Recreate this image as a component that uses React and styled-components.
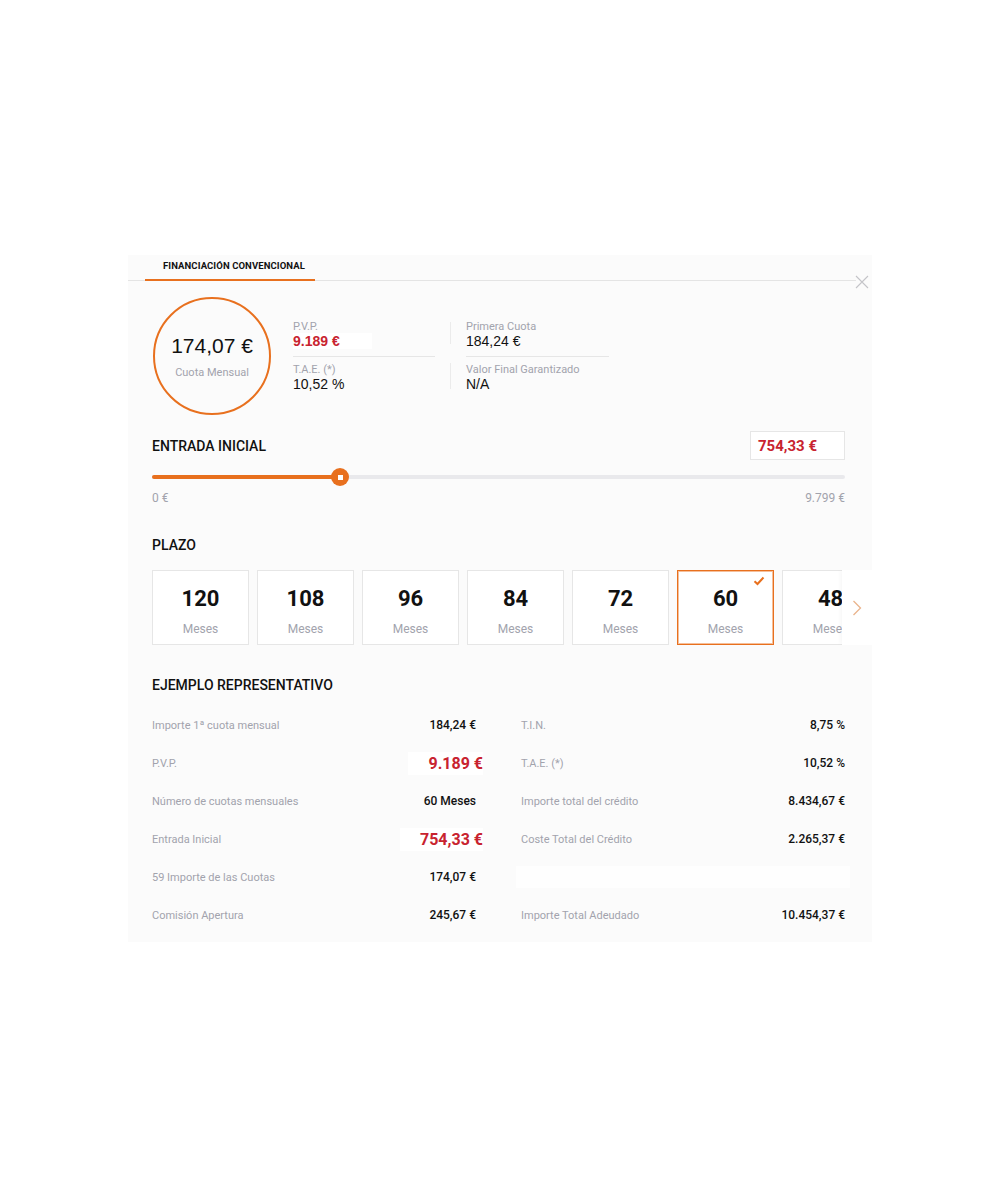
import React from "react";
import styled, { createGlobalStyle, css } from "styled-components";

const ORANGE = "#e8701e";
const RED = "#c8232f";
const GRAY = "#a2a3ad";
const HEAD = `"Roboto", "Liberation Sans", sans-serif`;
const SANS = `"Liberation Sans", Arial, sans-serif`;

const Global = createGlobalStyle`
  * { box-sizing: border-box; }
  html, body { margin: 0; padding: 0; background: #fff; }
  body { font-family: ${SANS}; color: #111; }
`;

const Page = styled.div`
  width: 1000px;
  height: 1200px;
  padding-top: 255px;
`;

const Panel = styled.div`
  position: relative;
  width: 744px;
  height: 687px;
  margin: 0 auto;
  background: #fbfbfb;
  padding: 0 27px 0 24px;
`;

const Header = styled.div`
  display: flex;
  height: 26px;
  margin: 0 -11px 0 -24px;
  padding-left: 17px;
  border-bottom: 1px solid #e4e4e4;
`;

const Tab = styled.div`
  display: flex;
  align-items: center;
  padding: 0 10px 4px 18px;
  height: 26px;
  margin-bottom: -1px;
  border-bottom: 2px solid ${ORANGE};
  font-family: ${HEAD};
  font-weight: 700;
  font-size: 9.5px;
  letter-spacing: 0.1px;
  color: #111;
`;

const Close = styled.button`
  position: absolute;
  top: 20px;
  right: 3px;
  width: 14px;
  height: 14px;
  padding: 0;
  border: 0;
  background: transparent;
  display: flex;
`;

const Top = styled.div`
  display: flex;
  align-items: center;
  gap: 22px;
  margin-top: 16px;
`;

const Circle = styled.div`
  width: 118px;
  height: 118px;
  margin-left: 1px;
  border-radius: 50%;
  border: 2.5px solid ${ORANGE};
  display: flex;
  flex-direction: column;
  align-items: center;
  justify-content: center;
`;

const CircleValue = styled.div`
  font-size: 21px;
  line-height: 24px;
  color: #111;
  margin-top: 1px;
`;

const CircleLabel = styled.div`
  font-family: ${HEAD};
  font-size: 11px;
  color: ${GRAY};
  margin-top: 8px;
`;

const InfoGrid = styled.div`
  display: grid;
  grid-template-columns: auto auto;
`;

const InfoCell = styled.div`
  display: flex;
  align-items: flex-start;
  padding-top: ${(p) => (p.$row === 2 ? "7px" : "0")};
`;

const Separator = styled.div`
  width: 1px;
  height: ${(p) => (p.$row === 2 ? "26px" : "22px")};
  margin-top: ${(p) => (p.$row === 2 ? "-1px" : "1px")};
  background: #ebebeb;
`;

const Block = styled.div`
  width: ${(p) => (p.$second ? "143px" : "142px")};
  margin: ${(p) => (p.$second ? "0 0 0 15px" : "0 15px 0 0")};
  ${(p) => p.$line && `padding-bottom: 7px; border-bottom: 1px solid #e6e6e6;`}
`;

const InfoLabel = styled.div`
  font-family: ${HEAD};
  font-size: 11px;
  line-height: 12px;
  color: ${GRAY};
`;

const InfoValue = styled.div`
  font-size: 14px;
  line-height: 16px;
  color: ${(p) => (p.$red ? RED : "#111")};
  font-weight: ${(p) => (p.$red ? 700 : 400)};
  & > span {
    display: inline-block;
    background: #fff;
    padding-right: 32px;
  }
`;

const SectionRow = styled.div`
  display: flex;
  align-items: center;
  justify-content: space-between;
  margin-top: ${(p) => p.$mt || 0}px;
`;

const SectionTitle = styled.div`
  font-family: ${HEAD};
  font-size: 14px;
  font-weight: 500;
  line-height: 18px;
  color: #111;
`;

const AmountBox = styled.div`
  width: 95px;
  height: 29px;
  border: 1px solid #e6e6e6;
  background: #fff;
  display: flex;
  align-items: center;
  padding-left: 7px;
  font-family: ${HEAD};
  font-weight: 700;
  font-size: 15px;
  color: ${RED};
`;

const Track = styled.div`
  position: relative;
  height: 4px;
  border-radius: 2px;
  background: #e9e9ec;
  margin-top: 15px;
`;

const Fill = styled.div`
  height: 100%;
  border-radius: 2px;
  background: ${ORANGE};
`;

const Thumb = styled.div`
  position: absolute;
  top: 50%;
  width: 18px;
  height: 18px;
  margin: -9px 0 0 -9px;
  border-radius: 50%;
  background: ${ORANGE};
  display: flex;
  align-items: center;
  justify-content: center;
  &::after {
    content: "";
    width: 5px;
    height: 5px;
    background: #fff;
  }
`;

const RangeLabels = styled.div`
  display: flex;
  justify-content: space-between;
  margin-top: 12px;
  font-family: ${HEAD};
  font-size: 12px;
  color: ${GRAY};
  line-height: 14px;
`;

const Carousel = styled.div`
  position: relative;
  margin: 16px -27px 0 0;
  overflow: hidden;
`;

const Tiles = styled.div`
  display: flex;
  gap: 8px;
`;

const Tile = styled.div`
  position: relative;
  flex: 0 0 97px;
  height: 75px;
  background: #fff;
  border: 1px solid #e6e6e6;
  display: flex;
  flex-direction: column;
  align-items: center;
  padding-top: 16px;
  ${(p) =>
    p.$active &&
    css`
      border-color: ${ORANGE};
      box-shadow: inset 0 0 0 1px rgba(232, 112, 30, 0.45);
    `}
`;

const TileNumber = styled.div`
  font-family: ${HEAD};
  font-weight: 700;
  font-size: 22px;
  line-height: 24px;
  color: #111;
`;

const TileUnit = styled.div`
  font-family: ${HEAD};
  font-size: 12px;
  line-height: 16px;
  color: ${GRAY};
  margin-top: 10px;
`;

const Check = styled.svg`
  position: absolute;
  top: 5px;
  right: 8px;
`;

const Next = styled.button`
  position: absolute;
  top: 0;
  right: 0;
  width: 30px;
  height: 75px;
  border: 0;
  padding: 0;
  background: #fff;
  box-shadow: -2px 0 4px rgba(0, 0, 0, 0.03);
  display: flex;
  align-items: center;
  justify-content: center;
`;

const Table = styled.div`
  display: grid;
  grid-template-columns: 324px 324px;
  column-gap: 45px;
  margin-top: 12px;
`;

const Row = styled.div`
  display: flex;
  align-items: center;
  justify-content: space-between;
  height: 38px;
`;

const Blank = styled.div`
  height: 22px;
  margin: 8px -5px;
  background: #fefefe;
`;

const Label = styled.div`
  font-family: ${HEAD};
  font-size: 11px;
  color: ${GRAY};
`;

const Value = styled.div`
  font-family: ${HEAD};
  font-weight: ${(p) => (p.$red ? 700 : 500)};
  font-size: ${(p) => (p.$red ? "16px" : "12px")};
  color: ${(p) => (p.$red ? RED : "#111")};
  ${(p) =>
    p.$red &&
    `margin-right: -7px; background: #fff; padding: 2px 0 2px 20px;`}
`;

const plazos = [120, 108, 96, 84, 72, 60, 48];

const leftRows = [
  ["Importe 1ª cuota mensual", "184,24 €"],
  ["P.V.P.", "9.189 €", true],
  ["Número de cuotas mensuales", "60 Meses"],
  ["Entrada Inicial", "754,33 €", true],
  ["59 Importe de las Cuotas", "174,07 €"],
  ["Comisión Apertura", "245,67 €"],
];

const rightRows = [
  ["T.I.N.", "8,75 %"],
  ["T.A.E. (*)", "10,52 %"],
  ["Importe total del crédito", "8.434,67 €"],
  ["Coste Total del Crédito", "2.265,37 €"],
  null,
  ["Importe Total Adeudado", "10.454,37 €"],
];

export default function App() {
  const pct = (340 - 152) / (845 - 152);
  return (
    <Page>
      <Global />
      <Panel>
        <Header>
          <Tab>FINANCIACIÓN CONVENCIONAL</Tab>
        </Header>
        <Close aria-label="Cerrar">
          <svg width="14" height="14" viewBox="0 0 14 14">
            <path d="M1 1L13 13M13 1L1 13" stroke="#c4c4c8" strokeWidth="1.1" fill="none" />
          </svg>
        </Close>

        <Top>
          <Circle>
            <CircleValue>174,07 €</CircleValue>
            <CircleLabel>Cuota Mensual</CircleLabel>
          </Circle>
          <InfoGrid>
            <InfoCell $row={1}>
              <Block $line>
                <InfoLabel>P.V.P.</InfoLabel>
                <InfoValue $red>
                  <span>9.189 €</span>
                </InfoValue>
              </Block>
            </InfoCell>
            <InfoCell $row={1}>
              <Separator $row={1} />
              <Block $second $line>
                <InfoLabel>Primera Cuota</InfoLabel>
                <InfoValue>184,24 €</InfoValue>
              </Block>
            </InfoCell>
            <InfoCell $row={2}>
              <Block>
                <InfoLabel>T.A.E. (*)</InfoLabel>
                <InfoValue>10,52 %</InfoValue>
              </Block>
            </InfoCell>
            <InfoCell $row={2}>
              <Separator $row={2} />
              <Block $second>
                <InfoLabel>Valor Final Garantizado</InfoLabel>
                <InfoValue>N/A</InfoValue>
              </Block>
            </InfoCell>
          </InfoGrid>
        </Top>

        <SectionRow $mt={16}>
          <SectionTitle>ENTRADA INICIAL</SectionTitle>
          <AmountBox>754,33 €</AmountBox>
        </SectionRow>
        <Track>
          <Fill style={{ width: `${pct * 100}%` }} />
          <Thumb style={{ left: `${pct * 100}%` }} />
        </Track>
        <RangeLabels>
          <span>0 €</span>
          <span>9.799 €</span>
        </RangeLabels>

        <SectionRow $mt={31}>
          <SectionTitle>PLAZO</SectionTitle>
        </SectionRow>
        <Carousel>
          <Tiles>
            {plazos.map((n) => (
              <Tile key={n} $active={n === 60}>
                {n === 60 && (
                  <Check width="12" height="10" viewBox="0 0 12 10">
                    <path d="M1.5 5.2L4.5 8L10.5 1.5" stroke={ORANGE} strokeWidth="2" fill="none" />
                  </Check>
                )}
                <TileNumber>{n}</TileNumber>
                <TileUnit>Meses</TileUnit>
              </Tile>
            ))}
          </Tiles>
          <Next aria-label="Siguiente">
            <svg width="10" height="16" viewBox="0 0 10 16">
              <path d="M1.5 1L8.5 8L1.5 15" stroke="#eab48c" strokeWidth="1.3" fill="none" />
            </svg>
          </Next>
        </Carousel>

        <SectionRow $mt={31}>
          <SectionTitle>EJEMPLO REPRESENTATIVO</SectionTitle>
        </SectionRow>
        <Table>
          <div>
            {leftRows.map(([l, v, red]) => (
              <Row key={l}>
                <Label>{l}</Label>
                <Value $red={red}>{v}</Value>
              </Row>
            ))}
          </div>
          <div>
            {rightRows.map((r, i) =>
              r ? (
                <Row key={i}>
                  <Label>{r[0]}</Label>
                  <Value>{r[1]}</Value>
                </Row>
              ) : (
                <Blank key={i} />
              )
            )}
          </div>
        </Table>
      </Panel>
    </Page>
  );
}
